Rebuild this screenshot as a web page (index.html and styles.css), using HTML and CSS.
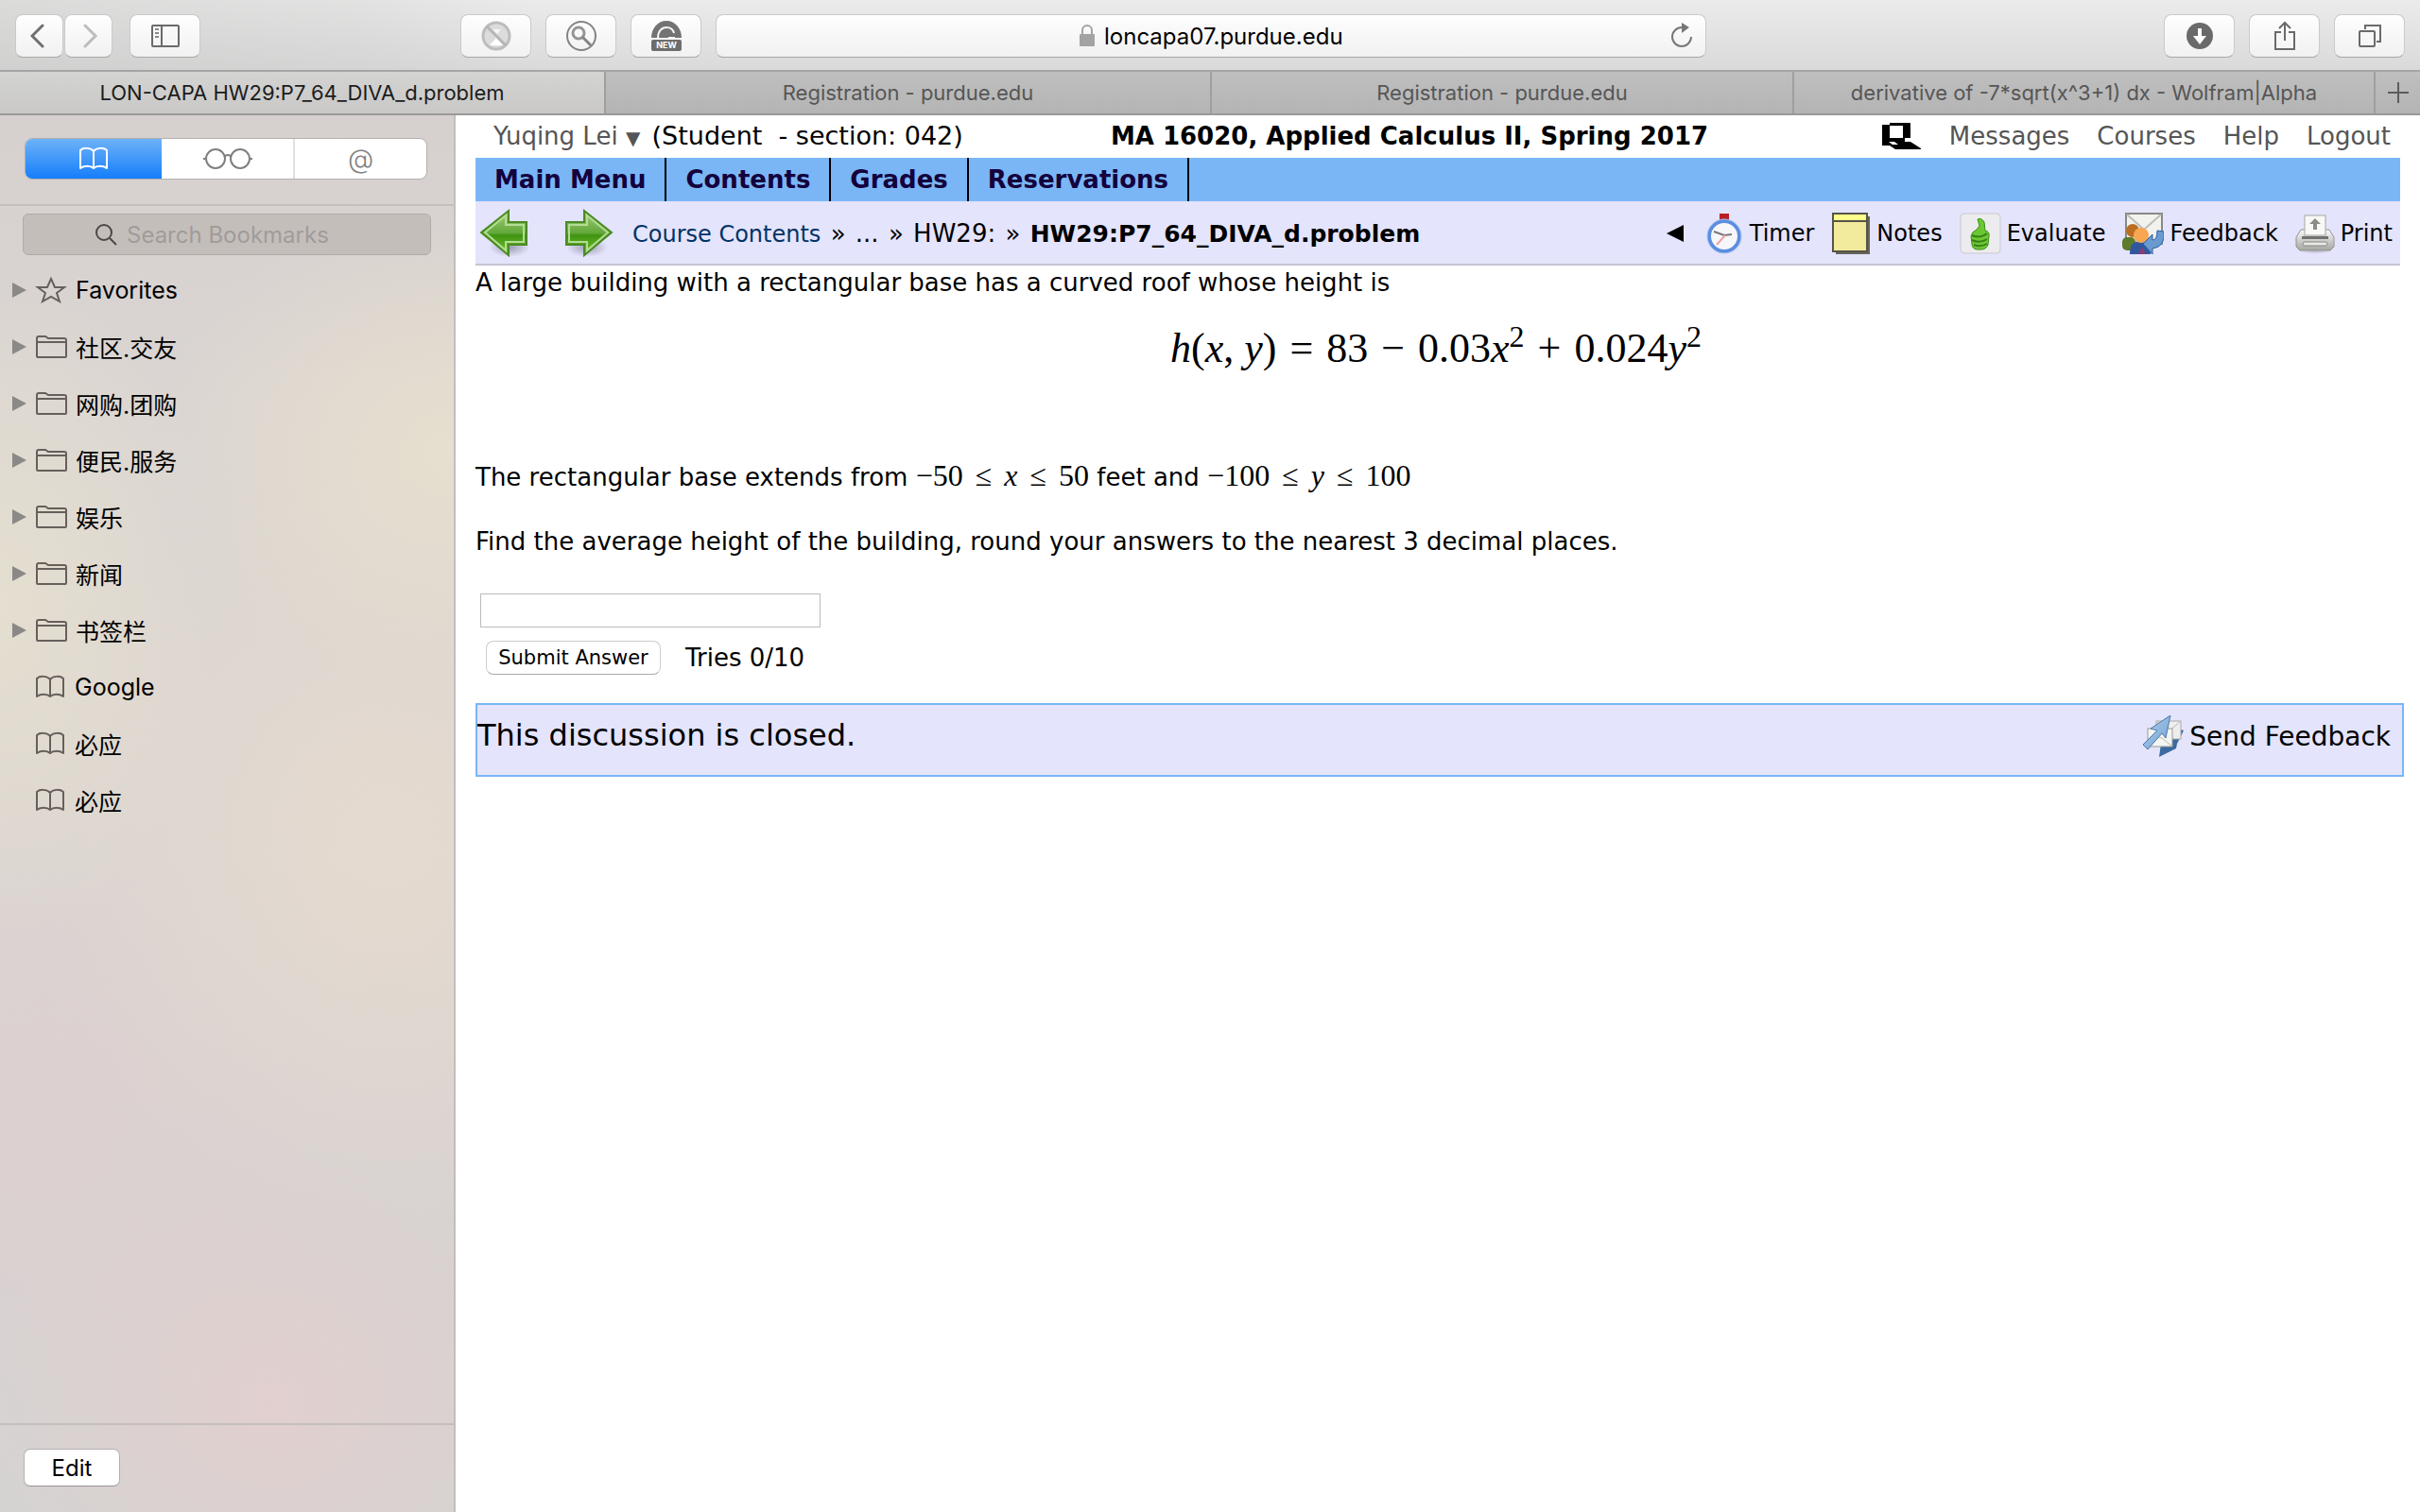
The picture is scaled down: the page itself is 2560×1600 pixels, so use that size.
FILE: index.html
```html
<!DOCTYPE html>
<html lang="en">
<head>
<meta charset="utf-8">
<title>LON-CAPA HW29:P7_64_DIVA_d.problem</title>
<link rel="stylesheet" href="styles.css">
</head>
<body>
<svg class="defs" width="0" height="0" aria-hidden="true">
  <defs>
    <linearGradient id="green" x1="0" y1="0" x2="0" y2="1"><stop offset="0" stop-color="#a5cc7c"/><stop offset=".5" stop-color="#63a83a"/><stop offset=".55" stop-color="#3f9312"/><stop offset="1" stop-color="#78c62c"/></linearGradient>
    <linearGradient id="steel" x1="0" y1="0" x2="0" y2="1"><stop offset="0" stop-color="#fafafa"/><stop offset="1" stop-color="#a4a6a2"/></linearGradient>
    <linearGradient id="blue" x1="0" y1="0" x2="1" y2="1"><stop offset="0" stop-color="#b4d0ee"/><stop offset="1" stop-color="#6f9fd0"/></linearGradient>
    <radialGradient id="shade"><stop offset="0" stop-color="#55556a" stop-opacity=".5"/><stop offset="1" stop-color="#55556a" stop-opacity="0"/></radialGradient>
    <symbol id="book" viewBox="0 0 32 26"><path d="M16 5C13 1 5 1 2 4v19c4-3 11-3 14 0 3-3 10-3 14 0V4C27 1 19 1 16 5zM16 5v18" fill="none" stroke="currentColor" stroke-width="2" stroke-linejoin="round"/></symbol>
    <symbol id="folder" viewBox="0 0 34 26"><path d="M2 23V4q0-2 2-2h7l3 2h17q2 0 2 2v17q0 1-1 1H3q-1 0-1-1zM2 8h31" fill="none" stroke="currentColor" stroke-width="2"/></symbol>
    <symbol id="star" viewBox="0 0 34 28"><path d="M17 2l4 9h10l-8 6 3 9-9-5-9 5 3-9-8-6h10z" fill="none" stroke="currentColor" stroke-width="2"/></symbol>
  </defs>
</svg>

<header class="toolbar">
  <div class="tools-left">
    <div class="nav">
      <button class="tool nav-btn" aria-label="Back"><svg width="20" height="28" viewBox="0 0 20 28"><path d="M13 3L2 14l11 11" fill="none" stroke="#6f6f6f" stroke-width="3" stroke-linecap="round"/></svg></button>
      <button class="tool nav-btn" aria-label="Forward"><svg width="20" height="28" viewBox="0 0 20 28"><path d="M6 3l11 11L6 25" fill="none" stroke="#bdbdbd" stroke-width="3" stroke-linecap="round"/></svg></button>
    </div>
    <button class="tool" aria-label="Show sidebar"><svg width="30" height="24" viewBox="0 0 30 24"><rect x="1" y="1" width="28" height="22" rx="1" fill="none" stroke="#6a6a6a" stroke-width="2"/><path d="M11 1v22" stroke="#6a6a6a" stroke-width="2"/><path d="M4 5h4M4 9h4M4 13h4" stroke="#8a8a8a" stroke-width="2"/></svg></button>
  </div>
  <div class="tools-center">
    <button class="tool" aria-label="Blocker"><svg width="32" height="32" viewBox="0 0 32 32"><circle cx="16" cy="16" r="14" fill="#dcdcdc" stroke="#bdbdbd" stroke-width="3"/><path d="M9 26l7-8 7 8z" fill="#fff"/><path d="M12 9h9l-4 5z" fill="#f4f4f4"/><path d="M6 6l20 20" stroke="#b5b5b5" stroke-width="3"/></svg></button>
    <button class="tool" aria-label="Inspect"><svg width="32" height="32" viewBox="0 0 32 32"><circle cx="16" cy="16" r="15" fill="none" stroke="#848484" stroke-width="2"/><circle cx="13" cy="13" r="6" fill="none" stroke="#959595" stroke-width="3"/><path d="M17 17l9 9" stroke="#848484" stroke-width="3"/></svg></button>
    <button class="tool" aria-label="New extension"><svg width="32" height="32" viewBox="0 0 32 32"><path d="M0 18a16 18 0 0 1 32 0z" fill="#737373"/><path d="M7 18C7 11 11 7 16 7c4 0 7 2 8 6" fill="none" stroke="#f4f4f4" stroke-width="2"/><path d="M18 18h7" stroke="#f4f4f4" stroke-width="2"/><rect y="20" width="32" height="12" rx="2" fill="#6d6d6d"/><text x="16" y="29" text-anchor="middle" class="new-text">NEW</text></svg></button>
    <div class="address">
      <svg width="16" height="24" viewBox="0 0 16 24"><rect y="10" width="16" height="13" rx="1" fill="#a3a3a3"/><path d="M3 11V6a5 5 0 0 1 10 0v5" fill="none" stroke="#a3a3a3" stroke-width="2"/></svg>
      <input class="address-input" type="text" aria-label="Address" value="loncapa07.purdue.edu">
      <button class="reload" aria-label="Reload"><svg width="26" height="28" viewBox="0 0 26 28"><path d="M23 15a10 10 0 1 1-10-10" fill="none" stroke="#777" stroke-width="2"/><path d="M13 0l8 5-8 6z" fill="#777"/></svg></button>
    </div>
  </div>
  <div class="tools-right">
    <button class="tool" aria-label="Downloads"><svg width="28" height="28" viewBox="0 0 28 28"><circle cx="14" cy="14" r="14" fill="#6a6a6a"/><path d="M12 6h4v8h5l-7 9-7-9h5z" fill="#fff"/></svg></button>
    <button class="tool" aria-label="Share"><svg width="24" height="32" viewBox="0 0 24 32"><path d="M8 12H2v18h20V12h-6M12 2v19M6 8l6-6 6 6" fill="none" stroke="#6a6a6a" stroke-width="2"/></svg></button>
    <button class="tool" aria-label="Show all tabs"><svg width="26" height="26" viewBox="0 0 26 26"><rect x="2" y="8" width="16" height="16" rx="1" fill="none" stroke="#6a6a6a" stroke-width="2"/><path d="M8 6V2h16v17h-4" fill="none" stroke="#6a6a6a" stroke-width="2"/></svg></button>
  </div>
</header>

<nav class="tabs" aria-label="Tabs">
  <button class="tab tab-active">LON-CAPA HW29:P7_64_DIVA_d.problem</button>
  <button class="tab">Registration - purdue.edu</button>
  <button class="tab">Registration - purdue.edu</button>
  <button class="tab">derivative of -7*sqrt(x^3+1) dx - Wolfram|Alpha</button>
  <button class="tab tab-new" aria-label="New tab"><svg width="22" height="22" viewBox="0 0 22 22"><path d="M11 0v22M0 11h22" stroke="#5c5c5c" stroke-width="2"/></svg></button>
</nav>

<div class="window">
  <aside class="sidebar">
    <div class="switcher">
      <div class="segments">
        <button class="segment segment-on" aria-label="Bookmarks"><svg width="32" height="26"><use href="#book"/></svg></button>
        <button class="segment" aria-label="Reading list"><svg width="52" height="24" viewBox="0 0 52 24"><g fill="none" stroke="#808080" stroke-width="2"><circle cx="13" cy="12" r="10"/><circle cx="39" cy="12" r="10"/><path d="M22 10q4-4 8 0M0 12h3M49 12h3"/></g></svg></button>
        <button class="segment segment-at" aria-label="Shared links">@</button>
      </div>
    </div>
    <div class="search">
      <svg width="24" height="24" viewBox="0 0 24 24"><circle cx="10" cy="10" r="8" fill="none" stroke="#4c4846" stroke-width="2"/><path d="M16 16l7 7" stroke="#4c4846" stroke-width="2"/></svg>
      <input class="search-input" type="search" placeholder="Search Bookmarks" aria-label="Search Bookmarks">
    </div>
    <ul class="bookmarks">
      <li><a class="bookmark" href="#"><i class="twist"></i><svg width="34" height="28"><use href="#star"/></svg>Favorites</a></li>
      <li><a class="bookmark" href="#"><i class="twist"></i><svg width="34" height="26"><use href="#folder"/></svg>社区.交友</a></li>
      <li><a class="bookmark" href="#"><i class="twist"></i><svg width="34" height="26"><use href="#folder"/></svg>网购.团购</a></li>
      <li><a class="bookmark" href="#"><i class="twist"></i><svg width="34" height="26"><use href="#folder"/></svg>便民.服务</a></li>
      <li><a class="bookmark" href="#"><i class="twist"></i><svg width="34" height="26"><use href="#folder"/></svg>娱乐</a></li>
      <li><a class="bookmark" href="#"><i class="twist"></i><svg width="34" height="26"><use href="#folder"/></svg>新闻</a></li>
      <li><a class="bookmark" href="#"><i class="twist"></i><svg width="34" height="26"><use href="#folder"/></svg>书签栏</a></li>
      <li><a class="bookmark leaf" href="#"><svg width="34" height="26"><use href="#book"/></svg>Google</a></li>
      <li><a class="bookmark leaf" href="#"><svg width="34" height="26"><use href="#book"/></svg>必应</a></li>
      <li><a class="bookmark leaf" href="#"><svg width="34" height="26"><use href="#book"/></svg>必应</a></li>
    </ul>
    <div class="sidebar-foot"><button class="edit">Edit</button></div>
  </aside>

  <main class="page">
    <div class="account">
      <div class="who"><a class="quiet" href="#">Yuqing Lei <span class="down">▼</span></a> <span class="role">(Student&nbsp; - section: 042)</span></div>
      <h1 class="course">MA 16020, Applied Calculus II, Spring 2017</h1>
      <div class="links">
        <a href="#" aria-label="Remote"><svg width="42" height="28" viewBox="0 0 42 28"><path d="M0 2h8V0h22v16h-6v4h6l11 7v1H14l-6-4H0zM8 3v13h14V3zM7 20l4 3h6l-4-3z" fill="#000" fill-rule="evenodd"/></svg></a>
        <a class="quiet" href="#">Messages</a>
        <a class="quiet" href="#">Courses</a>
        <a class="quiet" href="#">Help</a>
        <a class="quiet" href="#">Logout</a>
      </div>
    </div>
    <nav class="menu" aria-label="Course">
      <a class="menu-item" href="#">Main Menu</a><a class="menu-item" href="#">Contents</a><a class="menu-item" href="#">Grades</a><a class="menu-item" href="#">Reservations</a>
    </nav>
    <div class="crumbs">
      <a class="arrow" href="#" aria-label="Previous"><svg width="52" height="54" viewBox="0 0 52 54"><ellipse cx="32" cy="42" rx="22" ry="10" fill="url(#shade)"/><path d="M2 26L31 3v12h19v24H31v11z" fill="url(#green)" stroke="#4a8a24" stroke-width="2"/><path d="M6 26L28 8v10h19v18H28v9z" fill="none" stroke="#b4dc94" stroke-width="2"/></svg></a>
      <a class="arrow" href="#" aria-label="Next"><svg width="52" height="54" viewBox="0 0 52 54"><ellipse cx="24" cy="42" rx="22" ry="10" fill="url(#shade)"/><path d="M50 26L21 3v12H2v24h19v11z" fill="url(#green)" stroke="#4a8a24" stroke-width="2"/><path d="M46 26L24 8v10H5v18h19v9z" fill="none" stroke="#b4dc94" stroke-width="2"/></svg></a>
      <div class="trail"><a class="trail-link" href="#">Course Contents</a> <span class="sep">»</span> ... <span class="sep">»</span> HW29: <span class="sep">»</span> <b class="here">HW29:P7_64_DIVA_d.problem</b></div>
      <div class="actions">
        <button class="collapse" aria-label="Collapse"><svg width="18" height="18" viewBox="0 0 18 18"><path d="M18 0v18L0 9z"/></svg></button>
        <a class="action" href="#"><svg width="42" height="44" viewBox="0 0 42 44"><rect x="16" y="1" width="10" height="8" fill="#b81e24"/><circle cx="21" cy="25" r="16" fill="#f7f7fb" stroke="#5b8de0" stroke-width="4"/><circle cx="21" cy="25" r="18" fill="none" stroke="#a9c4f0" stroke-width="1"/><path d="M10 20l11 4 8-1" fill="none" stroke="#777" stroke-width="2"/><path d="M22 24l-9 10" stroke="#f0a0a0" stroke-width="2"/></svg>Timer</a>
        <a class="action" href="#"><svg width="42" height="44" viewBox="0 0 42 44"><path d="M5 4h36v40H5z" fill="#66665a"/><rect x="2" y="1" width="36" height="40" fill="#f3eb9c" stroke="#55554a" stroke-width="2"/><path d="M3 2h34v6H3z" fill="#ffff8c"/><path d="M2 9h36" stroke="#55554a" stroke-width="2"/></svg>Notes</a>
        <a class="action" href="#"><svg width="44" height="44" viewBox="0 0 44 44"><rect x="1" y="1" width="42" height="42" rx="4" fill="#ececee" stroke="#c9c9cf" stroke-width="1"/><path d="M19 7q4-2 7 3l1 9q5 1 4 6l-1 9q-2 5-7 5h-5q-5-1-5-6l-1-8q1-5 6-7l3-4z" fill="#6cc832" stroke="#3f8f1c" stroke-width="1"/><path d="M13 24q8 4 16-2M13 29q8 4 16-1M15 34q7 3 14-1" fill="none" stroke="#39801a" stroke-width="2"/></svg>Evaluate</a>
        <a class="action" href="#"><svg width="44" height="44" viewBox="0 0 44 44"><rect x="4" y="1" width="38" height="32" fill="#f2f2ee" stroke="#888" stroke-width="2"/><path d="M5 2l18 16L41 2" fill="none" stroke="#bdbdb8" stroke-width="2"/><rect x="0" y="26" width="14" height="14" rx="5" fill="#5c7b2b"/><circle cx="11" cy="19" r="7" fill="#bb6e22"/><path d="M8 44q0-14 11-14t11 14z" fill="#31589e"/><path d="M17 44l4-8 4 8z" fill="#8a3a72"/><circle cx="20" cy="24" r="8" fill="#f7a652"/><path d="M22 33l10-10v6q5 0 5-10l7 1q2 16-12 18v6z" fill="#6a9ad0" stroke="#2c60a2" stroke-width="1"/></svg>Feedback</a>
        <a class="action" href="#"><svg width="42" height="44" viewBox="0 0 42 44"><ellipse cx="21" cy="38" rx="20" ry="6" fill="url(#shade)"/><path d="M6 18h30l5 8v10l-4 4H5l-4-4V26z" fill="url(#steel)" stroke="#92948f" stroke-width="1"/><rect x="10" y="3" width="22" height="21" fill="#f8f8f6" stroke="#a5a5a2" stroke-width="1"/><path d="M21 6l6 6h-4v6h-4v-6h-4z" fill="#8a8c88"/><path d="M7 25h28v3H7z" fill="#70726e"/><rect x="8" y="31" width="26" height="4" rx="2" fill="#e8e8e4" stroke="#858782" stroke-width="1"/></svg>Print</a>
      </div>
    </div>

    <form class="problem">
      <p class="line">A large building with a rectangular base has a curved roof whose height is</p>
      <p class="formula"><i>h</i>(<i>x</i>,<i> y</i>)<span class="op">=</span>83<span class="op">−</span>0.03<i>x</i><sup>2</sup><span class="op">+</span>0.024<i>y</i><sup>2</sup></p>
      <p class="line">The rectangular base extends from <span class="math">−50 <span class="rel">≤</span> <i>x</i> <span class="rel">≤</span> 50</span> feet and <span class="math">−100 <span class="rel">≤</span> <i>y</i> <span class="rel">≤</span> 100</span></p>
      <p class="line question"><label for="answer">Find the average height of the building, round your answers to the nearest 3 decimal places.</label></p>
      <input class="answer" id="answer" type="text">
      <div class="submit-row"><button class="submit" type="button">Submit Answer</button><span>Tries 0/10</span></div>
    </form>

    <section class="discussion">
      <p class="closed">This discussion is closed.</p>
      <a class="send" href="#"><svg width="44" height="44" viewBox="0 0 44 44"><path d="M18 44l2-14h6l12-16 6 2-7 14-1 5z" fill="#3a6aa0"/><rect x="15" y="6" width="26" height="19" fill="#eeeeec" stroke="#aaa" stroke-width="1"/><path d="M16 7l12 10L40 7" fill="none" stroke="#bbb" stroke-width="1"/><rect x="6" y="14" width="26" height="19" fill="#f4f4f2" stroke="#999" stroke-width="1"/><path d="M7 32l10-9 4 1 10 8" fill="none" stroke="#bbb" stroke-width="1"/><path d="M1 31l15-15-7-2L30 0l-5 24-4-5L6 36z" fill="url(#blue)" stroke="#4878ae" stroke-width="1"/></svg>Send Feedback</a>
    </section>
  </main>
</div>
</body>
</html>
```
FILE: styles.css
```css
* { box-sizing: border-box; }

body {
  margin: 0;
  min-height: 100vh;
  display: flex;
  flex-direction: column;
  background: #fff;
  color: #000;
  font-family: Inter, "Noto Sans CJK SC", sans-serif;
  font-size: 24px;
}

button, input { font: inherit; color: inherit; margin: 0; }
button { padding: 0; cursor: pointer; }
a { color: inherit; text-decoration: none; }
svg { flex: none; display: block; }
.defs { position: absolute; }

/* Browser toolbar */
.toolbar {
  height: 76px;
  padding: 2px 16px 0;
  display: grid;
  grid-template-columns: 471fr 1318fr 739fr;
  align-items: center;
  background: linear-gradient(90deg, rgba(190, 190, 188, .35), rgba(190, 190, 188, .2) 15%, transparent 22%), linear-gradient(#ebebeb, #dadada);
  border-bottom: 2px solid #a5a5a5;
}
.tools-left { display: flex; gap: 18px; }
.tools-center { display: flex; gap: 15px; }
.tools-right { display: flex; gap: 15px; justify-content: flex-end; }
.nav { display: flex; gap: 1px; }
.tool {
  width: 75px;
  height: 46px;
  display: flex;
  align-items: center;
  justify-content: center;
  background: linear-gradient(#fefefe, #f1f1f1);
  border: 1px solid #cacaca;
  border-bottom-color: #a8a8a8;
  border-radius: 8px;
}
.nav-btn { width: 51px; }
.new-text { font-size: 9px; font-weight: 700; fill: #fff; }
.address {
  flex: 1;
  height: 46px;
  padding-right: 12px;
  display: flex;
  align-items: center;
  background: linear-gradient(#fefefe, #f1f1f1);
  border: 1px solid #cacaca;
  border-bottom-color: #a8a8a8;
  border-radius: 8px;
}
.address::before { content: ""; width: 40px; }
.address > svg { margin-left: auto; margin-right: 10px; }
.address-input { width: 254px; padding: 0; border: 0; background: none; }
.reload { margin-left: auto; border: 0; background: none; }

/* Tabs */
.tabs {
  height: 46px;
  display: grid;
  grid-template-columns: 641fr 641fr 616fr 615fr 47px;
  background: linear-gradient(#bfbfbf, #b4b4b4);
  border-bottom: 2px solid #999;
}
.tab {
  display: flex;
  align-items: center;
  justify-content: center;
  border: 0;
  border-right: 2px solid #9f9f9f;
  background: none;
  color: #565656;
  font-size: 22px;
}
.tab-active { background: linear-gradient(#d4d4d3, #c9c8c7); color: #1c1c1c; }
.tab-new { border-right: 0; }

/* Sidebar */
.window { flex: 1; display: flex; }
.sidebar {
  width: 482px;
  flex: none;
  display: flex;
  flex-direction: column;
  border-right: 2px solid #c3bebd;
  background:
    radial-gradient(ellipse 320px 260px at 100% 24%, rgba(232, 224, 206, .9), transparent),
    radial-gradient(ellipse 240px 360px at 0 35%, rgba(230, 224, 208, .9), transparent),
    radial-gradient(ellipse 360px 420px at 85% 52%, rgba(230, 219, 207, .9), transparent),
    radial-gradient(ellipse 300px 260px at 60% 92%, rgba(226, 207, 206, .9), transparent),
    radial-gradient(ellipse 300px 300px at 10% 72%, rgba(222, 208, 208, .8), transparent),
    linear-gradient(#d6d0cf, #dad5d2 20%, #dbd5d1 50%, #d8d2d1 75%, #d5d3d2);
}
.switcher { padding: 24px 28px 26px 26px; border-bottom: 2px solid #c4bebd; }
.segments {
  display: flex;
  height: 44px;
  overflow: hidden;
  background: #fff;
  border: 1px solid #b3afae;
  border-radius: 8px;
}
.segment {
  flex: 1;
  display: flex;
  align-items: center;
  justify-content: center;
  border: 0;
  background: none;
  color: #808080;
}
.segment-on { flex: none; width: 144px; background: linear-gradient(#6db2f8, #157efb); color: #fff; }
.segment-at { border-left: 2px solid #e0e0e0; font-size: 28px; font-weight: 300; }
.search {
  height: 44px;
  margin: 8px 24px 0;
  display: flex;
  align-items: center;
  justify-content: center;
  gap: 10px;
  background: #c4bebb;
  border: 1px solid #b0aaa8;
  border-radius: 6px;
}
.search-input { width: 246px; padding: 0; border: 0; background: none; appearance: none; }
.search-input::placeholder { color: #a19b99; opacity: 1; }
.bookmarks { margin: 7px 0 0; padding: 0; list-style: none; }
.bookmark {
  height: 60px;
  padding-left: 13px;
  display: flex;
  align-items: center;
  font-size: 25px;
}
.bookmark svg { margin-right: 9px; color: #675f5b; }
.leaf { padding-left: 36px; }
.twist { width: 15px; height: 16px; margin-right: 9px; background: #8b8888; clip-path: polygon(0 0, 100% 50%, 0 100%); }
.sidebar-foot { height: 94px; margin-top: auto; padding: 25px; border-top: 2px solid #c4bebd; }
.edit {
  width: 102px;
  height: 40px;
  background: #fff;
  border: 1px solid #b5b0b0;
  border-bottom-color: #989494;
  border-radius: 7px;
}

/* Course page */
.page {
  flex: 1;
  min-width: 0;
  padding: 0 21px;
  font-family: "DejaVu Sans", Verdana, sans-serif;
  font-size: 26px;
}
.account {
  height: 45px;
  padding-bottom: 2px;
  display: grid;
  grid-template-columns: 33% 1fr auto;
  align-items: center;
}
.who { padding-left: 19px; white-space: nowrap; }
.quiet { color: #555; }
.down { font-size: 20px; }
.role { margin-left: 4px; font-size: 27px; }
.course { margin: 0; font-size: 26px; }
.links { display: flex; align-items: center; gap: 29px; padding-right: 10px; }
.menu { height: 46px; display: flex; background: #7ab6f6; }
.menu-item {
  padding: 0 20px;
  border-right: 2px solid #000;
  color: #14003c;
  font-size: 26px;
  font-weight: 700;
  line-height: 46px;
}
.crumbs {
  height: 68px;
  padding: 2px 8px 0 4px;
  display: flex;
  align-items: center;
  background: #e4e4fc;
  border-bottom: 2px solid #c4c4d2;
  font-size: 24px;
}
.arrow { margin-right: 38px; }
.arrow + .arrow { margin-right: 20px; }
.trail { font-size: 26px; }
.trail-link { color: #003366; font-size: 24px; }
.sep { margin: 0 2px; }
.here { font-size: 25px; }
.actions { margin-left: auto; display: flex; align-items: center; gap: 18px; }
.collapse { border: 0; background: none; margin-right: 4px; }
.action { display: flex; align-items: center; gap: 6px; }

.line { margin: 0; line-height: 36px; }
.formula {
  margin: 10px 0 74px;
  padding-right: 4px;
  text-align: center;
  font: 44px/84px "Liberation Serif", "Times New Roman", serif;
}
.formula sup { font-size: 32px; line-height: 0; vertical-align: 16px; }
.op { margin: 0 14px; }
.math { font: 32px/36px "Liberation Serif", "Times New Roman", serif; }
.rel { margin: 0 5px; }
.question { margin-top: 32px; }
.answer {
  display: block;
  width: 360px;
  height: 36px;
  margin: 37px 0 0 5px;
  padding: 0 6px;
  border: 1px solid #bbb;
  background: #fff;
}
.submit-row { margin: 14px 0 0 11px; display: flex; align-items: center; gap: 26px; line-height: 34px; }
.submit {
  width: 185px;
  height: 36px;
  background: #fff;
  border: 1px solid #cdcdcd;
  border-bottom-color: #aaa;
  border-radius: 8px;
  font-size: 21px;
}
.discussion {
  height: 78px;
  margin: 30px -4px 0 0;
  display: flex;
  justify-content: space-between;
  background: #e4e4fc;
  border: 2px solid #7ab6f6;
}
.closed { margin: 0; font-size: 32px; line-height: 64px; }
.send { display: flex; align-items: center; gap: 6px; height: 66px; padding-right: 12px; font-size: 28px; }
```
